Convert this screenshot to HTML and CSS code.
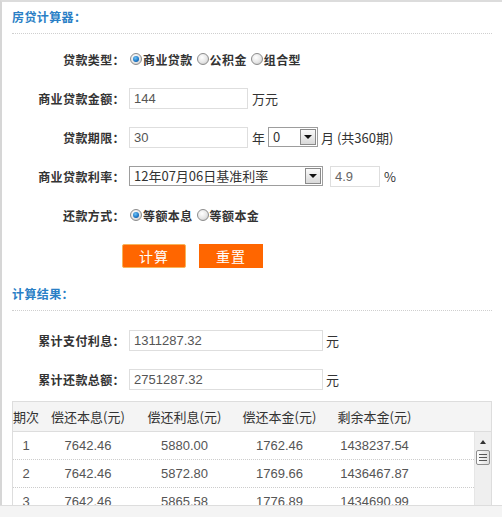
FILE: index.html
```html
<!DOCTYPE html>
<html lang="zh-CN">
<head>
<meta charset="utf-8">
<title>房贷计算器</title>
<link rel="stylesheet" href="styles.css">
</head>
<body>
<div class="calc">
  <div class="sec-title">房贷计算器：</div>
  <div class="form">
    <div class="row">
      <span class="lbl">贷款类型：</span>
      <span class="radio on"></span><span class="opt">商业贷款</span>
      <span class="radio"></span><span class="opt">公积金</span>
      <span class="radio"></span><span class="opt">组合型</span>
    </div>
    <div class="row">
      <span class="lbl">商业贷款金额：</span>
      <span class="inp w119">144</span>
      <span class="unit">万元</span>
    </div>
    <div class="row">
      <span class="lbl">贷款期限：</span>
      <span class="inp w119">30</span>
      <span class="unit">年</span>
      <span class="sel w50"><span class="sel-text">0</span><span class="sel-btn"></span></span>
      <span class="unit u-month">月 (共360期)</span>
    </div>
    <div class="row">
      <span class="lbl">商业贷款利率：</span>
      <span class="sel w194"><span class="sel-text">12年07月06日基准利率</span><span class="sel-btn"></span></span>
      <span class="inp w50 rate">4.9</span>
      <span class="unit">%</span>
    </div>
    <div class="row">
      <span class="lbl">还款方式：</span>
      <span class="radio on"></span><span class="opt">等额本息</span>
      <span class="radio"></span><span class="opt">等额本金</span>
    </div>
  </div>
  <div class="btns">
    <span class="btn btn-focus">计算</span>
    <span class="btn">重置</span>
  </div>
  <div class="sec-title sec-result">计算结果：</div>
  <div class="form result">
    <div class="row">
      <span class="lbl">累计支付利息：</span>
      <span class="inp w194">1311287.32</span>
      <span class="unit u-yuan">元</span>
    </div>
    <div class="row">
      <span class="lbl">累计还款总额：</span>
      <span class="inp w194">2751287.32</span>
      <span class="unit u-yuan">元</span>
    </div>
  </div>
  <div class="table">
    <div class="thead">
      <span class="c c1">期次</span>
      <span class="c c2">偿还本息(元)</span>
      <span class="c c3">偿还利息(元)</span>
      <span class="c c4">偿还本金(元)</span>
      <span class="c c5">剩余本金(元)</span>
    </div>
    <div class="tbody">
      <div class="rows">
        <div class="tr"><span class="c c1">1</span><span class="c c2">7642.46</span><span class="c c3">5880.00</span><span class="c c4">1762.46</span><span class="c c5">1438237.54</span></div>
        <div class="tr"><span class="c c1">2</span><span class="c c2">7642.46</span><span class="c c3">5872.80</span><span class="c c4">1769.66</span><span class="c c5">1436467.87</span></div>
        <div class="tr"><span class="c c1">3</span><span class="c c2">7642.46</span><span class="c c3">5865.58</span><span class="c c4">1776.89</span><span class="c c5">1434690.99</span></div>
      </div>
      <div class="scrollbar">
        <span class="sb-arrow"></span>
        <span class="sb-thumb"><i></i><i></i><i></i></span>
      </div>
    </div>
  </div>
</div>
<div class="footer"></div>
</body>
</html>
```
FILE: styles.css
```css
html, body {
  margin: 0;
  padding: 0;
  background: #fff;
}
body {
  width: 502px;
  height: 517px;
  overflow: hidden;
  font-family: "Noto Sans CJK SC", "Liberation Sans", sans-serif;
  color: #333;
}
.calc {
  box-sizing: border-box;
  height: 505px;
  border-top: 2px solid #dcdcdc;
  border-left: 2px solid #d6d6d6;
  padding: 0 10px;
  overflow: hidden;
}
.sec-title {
  padding: 5px 0 6px;
  line-height: 20px;
  font-size: 12px;
  font-weight: bold;
  letter-spacing: 0.4px;
  color: #2a7fc6;
  border-bottom: 1px dotted #cfcfcf;
}
.form {
  margin-top: 15px;
}
.row {
  display: flex;
  align-items: center;
  height: 20px;
  margin-bottom: 19px;
  font-size: 12px;
}
.lbl {
  width: 113px;
  text-align: right;
  font-weight: bold;
  letter-spacing: 0.4px;
  color: #333;
  flex-shrink: 0;
  margin-right: 4px;
}
.radio {
  box-sizing: border-box;
  width: 12px;
  height: 12px;
  border-radius: 50%;
  border: 1px solid #8c8c8c;
  background: radial-gradient(circle at 40% 35%, #ffffff 0%, #e6e6e6 55%, #bdbdbd 100%);
  flex-shrink: 0;
  margin-left: 4px;
  position: relative;
}
.lbl + .radio {
  margin-left: 1px;
}
.radio.on::after {
  content: "";
  position: absolute;
  left: 2px;
  top: 2px;
  width: 6px;
  height: 6px;
  border-radius: 50%;
  background: radial-gradient(circle at 40% 35%, #6fc3f5 0%, #1a74c4 60%, #0c3f7a 100%);
}
.opt {
  font-weight: bold;
  letter-spacing: 0.4px;
  color: #333;
  margin-left: 1px;
}
.inp {
  box-sizing: border-box;
  height: 21px;
  border: 1px solid #dedede;
  padding-left: 4px;
  font-family: "Liberation Sans", Arial, sans-serif;
  font-size: 13px;
  line-height: 19px;
  color: #555;
  background: #fff;
  flex-shrink: 0;
}
.w119 { width: 119px; }
.w194 { width: 194px; }
.w50 { width: 50px; }
.rate {
  margin-left: 7px;
  color: #666;
}
.unit {
  margin-left: 4px;
  font-size: 13px;
  color: #333;
}
.u-month { margin-left: 3px; }
.u-yuan { margin-left: 3px; }
.unit + .sel { margin-left: 3px; }
.sel {
  box-sizing: border-box;
  height: 20px;
  border: 1px solid #9d9d9d;
  display: flex;
  align-items: center;
  background: #fff;
  flex-shrink: 0;
}
.sel-text {
  flex: 1;
  padding-left: 4px;
  font-size: 13px;
  color: #333;
  white-space: nowrap;
  overflow: hidden;
  line-height: 18px;
}
.sel-btn {
  box-sizing: border-box;
  width: 16px;
  height: 16px;
  margin-right: 1px;
  border: 1px solid #8a8a8a;
  background: linear-gradient(#fafafa, #d9d9d9);
  position: relative;
  flex-shrink: 0;
}
.sel-btn::after {
  content: "";
  position: absolute;
  left: 3px;
  top: 5px;
  border-left: 4px solid transparent;
  border-right: 4px solid transparent;
  border-top: 4px solid #111;
}
.btns {
  display: flex;
  gap: 13px;
  padding-left: 110px;
}
.btn {
  width: 64px;
  height: 24px;
  background: #ff6600;
  color: #fff;
  font-size: 14px;
  line-height: 24px;
  text-align: center;
  letter-spacing: 1px;
}
.btn-focus {
  box-sizing: border-box;
  border: 1px solid #f7b45a;
  border-radius: 2px;
  line-height: 22px;
}
.sec-result {
  margin-top: 11px;
}
.result {
  margin-top: 19px;
}
.result .row:last-child {
  margin-bottom: 0;
}
.table {
  margin-top: 12px;
  border: 1px solid #dddddd;
}
.thead {
  display: flex;
  height: 29px;
  align-items: center;
  background: #f4f4f4;
  border-bottom: 1px solid #dddddd;
  font-size: 13px;
  color: #333;
}
.c {
  text-align: center;
  flex-shrink: 0;
  white-space: nowrap;
}
.c1 { width: 26px; }
.c2 { width: 98px; }
.c3 { width: 95px; }
.c4 { width: 95px; }
.c5 { width: 95px; }
.tbody {
  display: flex;
  height: 100px;
}
.rows {
  flex: 1;
}
.tr {
  display: flex;
  align-items: center;
  height: 27px;
  border-bottom: 1px dotted #cccccc;
  font-family: "Liberation Sans", Arial, sans-serif;
  font-size: 13px;
  color: #555;
}
.scrollbar {
  width: 16px;
  background: #efefef;
  border-left: 1px solid #e6e6e6;
  display: flex;
  flex-direction: column;
  align-items: center;
}
.sb-arrow {
  margin-top: 8px;
  border-left: 3px solid transparent;
  border-right: 3px solid transparent;
  border-bottom: 4px solid #333;
}
.sb-thumb {
  box-sizing: border-box;
  width: 14px;
  height: 15px;
  margin-top: 6px;
  border: 1px solid #8e8e8e;
  border-radius: 2px;
  background: linear-gradient(90deg, #fdfdfd, #dedede);
  display: flex;
  flex-direction: column;
  justify-content: center;
  align-items: center;
  gap: 2px;
}
.sb-thumb i {
  display: block;
  width: 8px;
  height: 1px;
  background: #555;
}
.footer {
  height: 11px;
  background: #f4f4f4;
  border-top: 1px solid #dddddd;
}
```
